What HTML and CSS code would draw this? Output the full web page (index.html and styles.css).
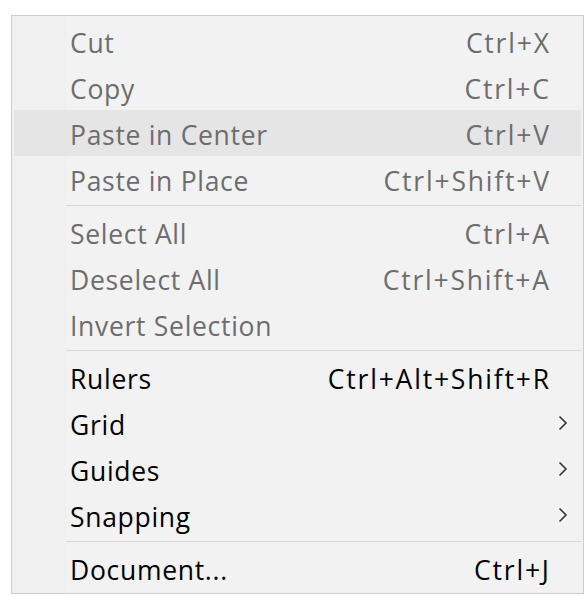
FILE: index.html
```html
<!DOCTYPE html>
<html>
<head>
<meta charset="utf-8">
<link rel="stylesheet" href="styles.css">
</head>
<body>
<div class="menu">
  <div class="item disabled"><span class="label">Cut</span><span class="key">Ctrl+X</span></div>
  <div class="item disabled"><span class="label">Copy</span><span class="key">Ctrl+C</span></div>
  <div class="item disabled hover"><span class="label">Paste in Center</span><span class="key">Ctrl+V</span></div>
  <div class="item disabled"><span class="label">Paste in Place</span><span class="key">Ctrl+Shift+V</span></div>
  <div class="sep"></div>
  <div class="item disabled"><span class="label">Select All</span><span class="key">Ctrl+A</span></div>
  <div class="item disabled"><span class="label">Deselect All</span><span class="key">Ctrl+Shift+A</span></div>
  <div class="item disabled"><span class="label">Invert Selection</span><span class="key"></span></div>
  <div class="sep"></div>
  <div class="item"><span class="label">Rulers</span><span class="key">Ctrl+Alt+Shift+R</span></div>
  <div class="item sub"><span class="label">Grid</span><svg class="chev" width="10" height="16" viewBox="0 0 10 16"><polyline points="1.5,1.5 8,8 1.5,14.5" fill="none" stroke="#333" stroke-width="1.6"/></svg></div>
  <div class="item sub"><span class="label">Guides</span><svg class="chev" width="10" height="16" viewBox="0 0 10 16"><polyline points="1.5,1.5 8,8 1.5,14.5" fill="none" stroke="#333" stroke-width="1.6"/></svg></div>
  <div class="item sub"><span class="label">Snapping</span><svg class="chev" width="10" height="16" viewBox="0 0 10 16"><polyline points="1.5,1.5 8,8 1.5,14.5" fill="none" stroke="#333" stroke-width="1.6"/></svg></div>
  <div class="sep"></div>
  <div class="item"><span class="label">Document...</span><span class="key">Ctrl+J</span></div>
</div>
</body>
</html>
```

FILE: styles.css
```css
html, body {
  margin: 0;
  padding: 0;
  background: #ffffff;
}
body {
  font-family: "Open Sans", "Noto Sans", sans-serif;
}
.menu {
  margin: 15px 0 0 11px;
  width: 571px;
  border: 1px solid #cccccc;
  background: linear-gradient(to right, #f0f0f0 0, #f0f0f0 54px, #f2f2f2 54px);
  padding: 2px 0;
  display: flex;
  flex-direction: column;
}
.item {
  box-sizing: border-box;
  height: 46px;
  margin: 0 2px;
  display: flex;
  align-items: center;
  padding: 3px 32px 0 56px;
  font-size: 26.5px;
  color: #000000;
}
.item.disabled {
  color: #6d6d6d;
}
.item.hover {
  background: #e5e5e5;
}
.label {
  flex: 1;
  white-space: nowrap;
  letter-spacing: 0.7px;
}
.key {
  white-space: nowrap;
  letter-spacing: 1.8px;
  margin-right: -1.8px;
}
.item.sub {
  padding-right: 13px;
}
.chev {
  display: block;
  margin-top: -3px;
}
.sep {
  height: 1px;
  background: #d7d7d7;
  margin: 3px 2px 3px 54px;
}
```
